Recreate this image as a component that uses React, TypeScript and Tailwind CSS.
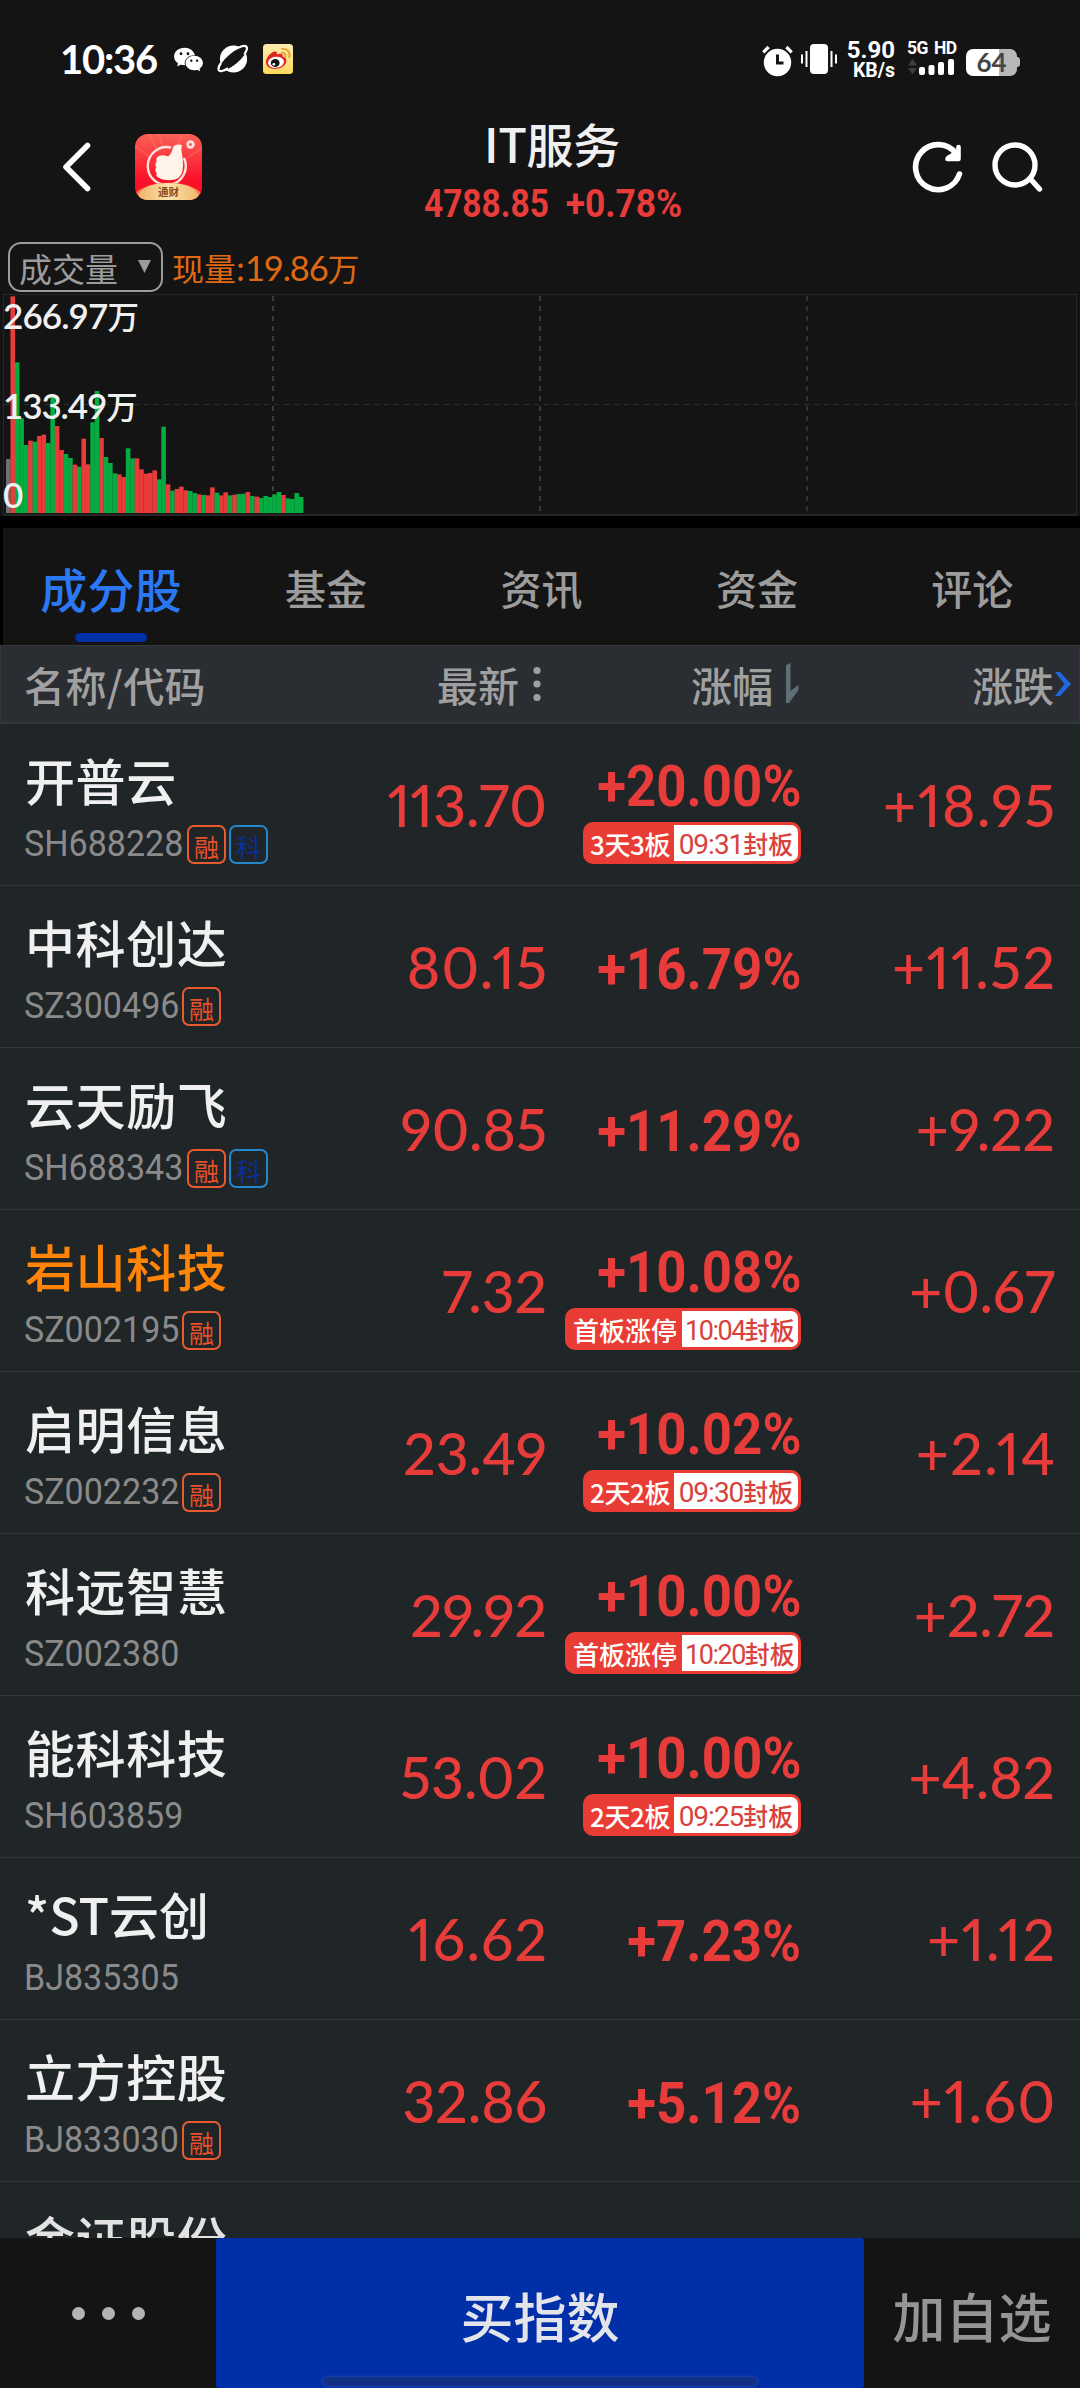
import React from "react";
import { AiFillWechat } from "react-icons/ai";

const CJK = "font-['Noto_Sans_CJK_SC',sans-serif]";
const RED = "#e83c3b";
const GREEN = "#04ac41";

type Stock = {
  name: string;
  code: string;
  price: string;
  pct: string;
  diff: string;
  rong?: boolean;
  ke?: boolean;
  held?: boolean;
  board?: string;
  time?: string;
};

const stocks: Stock[] = [
  { name: "开普云", code: "SH688228", price: "113.70", pct: "+20.00%", diff: "+18.95", rong: true, ke: true, board: "3天3板", time: "09:31" },
  { name: "中科创达", code: "SZ300496", price: "80.15", pct: "+16.79%", diff: "+11.52", rong: true },
  { name: "云天励飞", code: "SH688343", price: "90.85", pct: "+11.29%", diff: "+9.22", rong: true, ke: true },
  { name: "岩山科技", code: "SZ002195", price: "7.32", pct: "+10.08%", diff: "+0.67", rong: true, held: true, board: "首板涨停", time: "10:04" },
  { name: "启明信息", code: "SZ002232", price: "23.49", pct: "+10.02%", diff: "+2.14", rong: true, board: "2天2板", time: "09:30" },
  { name: "科远智慧", code: "SZ002380", price: "29.92", pct: "+10.00%", diff: "+2.72", board: "首板涨停", time: "10:20" },
  { name: "能科科技", code: "SH603859", price: "53.02", pct: "+10.00%", diff: "+4.82", board: "2天2板", time: "09:25" },
  { name: "*ST云创", code: "BJ835305", price: "16.62", pct: "+7.23%", diff: "+1.12" },
  { name: "立方控股", code: "BJ833030", price: "32.86", pct: "+5.12%", diff: "+1.60", rong: true },
];

// Heights of the volume bars in thirds of a pixel, with r/g/n for up/down/neutral.
const volume =
  "n162 r650 g452 g284 g204 r217 g214 r231 r235 g210 g349 r261 r189 g177 g165 r145 g139 r223 r146 g272 g366 r225 g168 g150 g119 r116 r108 g194 g164 r164 r131 r118 r120 r128 g101 g259 r86 g67 r72 r79 r68 g66 g60 r56 g54 r53 r77 g61 r53 r62 g53 r55 g57 g58 r63 g51 r49 g45 g51 g48 g56 g63 r54 g44 g42 g60 g48"
    .split(" ")
    .map((s) => ({ kind: s[0], h: Number(s.slice(1)) / 3 }));

function StatusBar() {
  return (
    <div className="flex h-[118px] items-start justify-between pl-[60px] pr-[60px] text-white">
      <div className="mt-[44px] flex h-[30px] items-center">
        <span className="w-[114px] whitespace-nowrap font-['Lato',sans-serif] text-[40px] font-bold leading-[30px] tracking-[-1.200px]">10:36</span>
        <AiFillWechat className="-ml-[2px] h-[33px] w-[33px]" />
        <svg className="ml-[12px] h-[32px] w-[32px]" viewBox="0 0 32 32">
          <circle cx="16.5" cy="16" r="13.6" fill="#fff" />
          <ellipse cx="16" cy="16" rx="17.5" ry="5.6" transform="rotate(-40 16 16)" fill="#141414" />
          <path d="M4 20C.5 25 .5 29 5 28c2.500-.5 4-1.500 6-2.800M22 4.500c5-2.500 9-2 7.800 2-.5 1.800-1.300 3.200-2.500 5" fill="none" stroke="#fff" strokeWidth="2.200" />
        </svg>
        <svg className="ml-[14px] h-[30px] w-[30px]" viewBox="0 0 30 30">
          <defs>
            <linearGradient id="wb" x1="0" y1="0" x2="0" y2="1"><stop stopColor="#fdeab0" /><stop offset="1" stopColor="#fdd95c" /></linearGradient>
          </defs>
          <rect width="30" height="30" rx="3.500" fill="url(#wb)" />
          <path d="M3 18c0-5 6-11 9.500-10.500 1.600.3 1.700 1.700 1.300 3 3-1.400 6.700-1.200 5.800 2 6 2 4.300 7.500 0 10.200C13 27 3 25 3 18Z" fill="#e02322" />
          <ellipse cx="13" cy="18.300" rx="8" ry="5.600" fill="#fff" transform="rotate(-7 13 18.300)" />
          <ellipse cx="12.200" cy="19" rx="4.400" ry="4" fill="#111" />
          <circle cx="10.800" cy="20.300" r="1.400" fill="#fff" />
          <path d="M18.800 8.800c2.600-.3 4.300 1.500 3.600 4.300M19 4.900c5.200-.6 8.500 3 7.300 8.200" fill="none" stroke="#eba030" strokeWidth="1.800" strokeLinecap="round" />
        </svg>
      </div>
      <div className="mt-[41px] flex h-[36px]">
        <svg className="mt-[4px] h-[32px] w-[31px]" viewBox="0 0 31 32">
          <circle cx="15.500" cy="17.500" r="13.700" fill="#fff" />
          <path d="M1.300 7.300 6.600 2M24.400 2l5.300 5.300" stroke="#fff" strokeWidth="3.200" />
          <path d="M15.500 9.500V18h6" fill="none" stroke="#141414" strokeWidth="3" />
        </svg>
        <svg className="ml-[8px] mt-[3px] h-[30px] w-[36px]" viewBox="0 0 36 30">
          <rect x="9" width="18" height="30" rx="4" fill="#fff" />
          <path d="M1 10.500v9M5.500 7v16M30.500 7v16M35 10.500v9" stroke="#fff" strokeWidth="2" />
        </svg>
        <div className="ml-[12px] flex w-[46px] flex-col items-end font-['Roboto',sans-serif] font-bold">
          <span className="text-[24px] leading-[18px]">5.90</span>
          <span className="mt-[2px] text-[19.500px] leading-[19px]">KB/s</span>
        </div>
        <div className="ml-[12px] flex w-[49px] flex-col">
          <span className="whitespace-nowrap font-['Roboto',sans-serif] text-[17.500px] font-bold leading-[15px] tracking-[-0.6px] [word-spacing:2.500px]">5G HD</span>
          <svg className="mt-[2px] h-[18px] w-[48px]" viewBox="0 0 48 18">
            <path d="M1 7.500 5.500 1 10 7.500ZM1 10h9l-4.500 6.500Z" fill="#3e3e3e" />
            <rect x="12" y="9" width="6" height="8" rx="2" fill="#fff" />
            <rect x="21.500" y="7" width="6" height="10" rx="2" fill="#fff" />
            <rect x="31" y="4" width="6" height="13" rx="2" fill="#fff" />
            <rect x="41" y="1" width="6" height="16" rx="2" fill="#fff" />
          </svg>
        </div>
        <div className="ml-[10px] mt-[6px] flex items-center">
          <div className="flex h-[27px] w-[51px] items-center justify-center rounded-[7px] bg-[linear-gradient(90deg,#fff_0,#fff_33px,#b8b8b8_33px)] font-['Lato',sans-serif] text-[26px] font-bold leading-none text-[#444]">64</div>
          <div className="h-[10px] w-[3px] rounded-r-[3px] bg-[#b8b8b8]" />
        </div>
      </div>
    </div>
  );
}

function AppLogo() {
  return (
    <div className="relative ml-[43px] mt-[16px] h-[66px] w-[67px] overflow-hidden rounded-[13px]">
      <svg className="h-full w-full" viewBox="0 0 67 66">
        <defs>
          <linearGradient id="lg" x1="0" y1="0" x2="0" y2="1"><stop stopColor="#fb6257" /><stop offset=".7" stopColor="#fb1029" /></linearGradient>
          <linearGradient id="gd" x1="0" y1="0" x2="1" y2="0"><stop stopColor="#eeb46a" /><stop offset=".5" stopColor="#fbe3ac" /><stop offset="1" stopColor="#efb76c" /></linearGradient>
        </defs>
        <rect width="67" height="66" fill="url(#lg)" />
        <path d="M14 0l9 18M24 0l4 14M47 0l-4 12M0 12l16 12M67 14 52 24" stroke="#ff8a6c" strokeWidth="1" opacity=".6" />
        <path d="M36 13.500A19 19 0 1 0 49 24" fill="none" stroke="#ffe4de" strokeWidth="2.400" />
        <path d="M24 22c3-1.500 7-.5 9 .5 3-2 4-5 5-9 1-3.500 6-3.500 9-2.500-1.500 5 .5 9 .8 15 .4 7 .5 14-4.500 18-5 3-14 2.500-18 .5-3-1-5-3-3.500-5.500-2-1.500-2-4-.5-5.500-1.500-2-1-4.500.5-6-1-2-.5-4.500 2.200-5.500Z" fill="#fff4ea" />
        <circle cx="55.500" cy="10.500" r="4.200" fill="#ffe0dc" />
        <circle cx="55.500" cy="10.500" r="1.600" fill="#f5615c" />
        <path d="M0 60C12 45 55 45 67 60v6H0Z" fill="#f57a4e" />
        <ellipse cx="33.500" cy="62" rx="30" ry="13" fill="url(#gd)" />
      </svg>
      <span className={`${CJK} absolute inset-x-0 bottom-[3px] text-center text-[10.500px] font-bold leading-[11px] text-[#8a4a1c]`}>通财</span>
    </div>
  );
}

function Header() {
  return (
    <div className="flex h-[120px] items-start">
      <svg className="ml-[60px] mt-[24px] h-[50px] w-[32px]" viewBox="0 0 32 50">
        <path d="M27.500 3.500 6 25l21.500 21.500" fill="none" stroke="#fff" strokeWidth="5.600" strokeLinecap="round" strokeLinejoin="round" />
      </svg>
      <AppLogo />
      <div className="ml-[152px] flex w-[400px] flex-col items-center">
        <span className={`${CJK} -mt-[3px] mr-[4px] text-[47px] font-medium leading-[56px] tracking-[-0.3px] text-[#f0f0f0]`}>IT服务</span>
        <div className="mt-[15px] flex w-[257px] justify-between font-['Roboto',sans-serif] text-[38px] font-bold leading-[36px] text-[#e83c3b]">
          <span className="w-[124px] origin-left -translate-x-[2px] scale-x-[0.88]">4788.85</span>
          <span className="flex w-[116px] justify-end"><span className="origin-right scale-x-[0.93]">+0.78%</span></span>
        </div>
      </div>
      <svg className="ml-[157px] mt-[22px] h-[54px] w-[54px]" viewBox="0 0 54 54" fill="none" stroke="#fff" strokeWidth="5.600" strokeLinecap="round" strokeLinejoin="round">
        <path d="M48.500 34A22.500 22.500 0 1 1 45 13.500" />
        <path d="M47.500 7v12H36.500" strokeWidth="4.600" />
        <path d="M45 14 38 18" strokeWidth="6" />
      </svg>
      <svg className="ml-[25px] mt-[22px] h-[54px] w-[54px]" viewBox="0 0 54 54" fill="none" stroke="#fff" strokeWidth="5.400" strokeLinecap="round">
        <circle cx="25" cy="25" r="20" />
        <path d="M40 38.500l9.500 10.500" />
      </svg>
    </div>
  );
}

function VolumeChart() {
  return (
    <div className="h-[278px]">
      <div className="flex h-[56px] items-start pl-[8px] pt-[4px]">
        <div className={`${CJK} flex h-[50px] w-[155px] items-center rounded-[13px] border-2 border-[#9c9c9c] pl-[9px] pt-[2px] text-[33px] leading-none text-[#9c9c9c]`}>
          <span className="w-[119px]">成交量</span>
          <svg className="-mt-[3px] h-[13px] w-[13px]" viewBox="0 0 13 13"><path d="M0 0h13L6.500 13Z" fill="#9c9c9c" /></svg>
        </div>
        <span className={`${CJK} ml-[9px] mt-[2px] whitespace-nowrap text-[32px] leading-[46px] text-[#df6913]`}>
          现量:<span className="font-['Lato',sans-serif] text-[34.500px] tracking-[-1.100px]">19.86</span>万
        </span>
      </div>
      <div className="relative ml-[3px] h-[222px] w-[1074px] border border-b-2 border-[#262626]">
        <svg className="h-[219px] w-[1072px]" viewBox="4 295 1072 219" shapeRendering="crispEdges">
          <g stroke="#3a3a3a" strokeDasharray="5 5" strokeWidth="2">
            <path d="M273 296V513" />
            <path d="M540 296V513" />
            <path d="M807 296V513" opacity=".75" />
            <path d="M4 404.500H1076" strokeWidth="1" opacity=".7" />
          </g>
          <g shapeRendering="auto">
            {volume.map((v, i) => (
              <rect key={i} x={6 + i * 4.437} y={513 - v.h} width="4.600" height={v.h} fill={v.kind === "r" ? RED : v.kind === "g" ? GREEN : "#6e7078"} />
            ))}
          </g>
        </svg>
        <div className={`${CJK} absolute inset-0 -top-[2px] flex flex-col text-[31.500px] font-medium leading-[40px] text-[#f0f0f0]`}>
          <span className="-ml-[1px] mt-[2px]"><span className="font-['Lato',sans-serif] text-[35px] font-semibold tracking-[-0.9px]">266.97</span>万</span>
          <span className="-ml-[1px] mt-[50px]"><span className="font-['Lato',sans-serif] text-[35px] font-semibold tracking-[-1.100px]">133.49</span>万</span>
          <span className="-ml-[1px] mt-[49px] font-['Lato',sans-serif] text-[35px] font-semibold">0</span>
        </div>
      </div>
    </div>
  );
}

function Tabs() {
  return (
    <div className="h-[129px] bg-black pl-[3px] pt-[12px]">
      <div className={`${CJK} grid h-[117px] grid-cols-5 bg-[#141414] text-center text-[41px] font-medium leading-[119px] text-[#9c9c9c]`}>
        <div className="relative pl-[1px] text-[47px] tracking-[0.3px] text-[#2b78f5]">
          成分股
          <div className="absolute left-[72px] top-[105px] h-[9px] w-[72px] rounded-full bg-[#002fa8]" />
        </div>
        {["基金", "资讯", "资金", "评论"].map((t) => <div key={t}>{t}</div>)}
      </div>
    </div>
  );
}

function TableHead() {
  return (
    <div className={`${CJK} flex h-[79px] items-center whitespace-nowrap border border-b-2 border-[#33383b] bg-[#2a2e32] pl-[23px] text-[41px] font-medium leading-[76px] text-[#a0a0a0]`}>
      <span className="w-[413px] tracking-[0.4px]">名称/代码</span>
      <span className="w-[84px]">最新</span>
      <svg className="ml-[12px] h-[36px] w-[8px]" viewBox="0 0 8 36" fill="#a0a0a0">
        <circle cx="4" cy="4.500" r="3.600" /><circle cx="4" cy="18" r="3.600" /><circle cx="4" cy="31.500" r="3.600" />
      </svg>
      <span className="ml-[150px] w-[84px]">涨幅</span>
      <svg className="ml-[11px] h-[42px] w-[13px]" viewBox="0 0 13 42"><path d="M0 2 4.500 0v28l8-6v5L3 40H0Z" fill="#5f6f78" /></svg>
      <span className="ml-[173px] w-[83px]">涨跌</span>
      <svg className="h-[24px] w-[16px]" viewBox="0 0 16 24"><path d="M0 0h5l11 12L5 24H0l9.500-12Z" fill="#1f68e0" /></svg>
    </div>
  );
}

function Badge({ kind }: { kind: "rong" | "ke" }) {
  return kind === "rong" ? (
    <span className={`${CJK} flex h-[39px] w-[39px] items-center justify-center rounded-[7px] border-2 border-[#e85a30] pt-[4px] text-[25px] leading-none text-[#e8502a]`}>融</span>
  ) : (
    <span className={`${CJK} flex h-[39px] w-[39px] items-center justify-center rounded-[7px] border-2 border-[#2486cc] pt-[4px] text-[25px] leading-none text-[#0a2f9c]`}>科</span>
  );
}

function Figure({ value }: { value: string }) {
  const spacing = value.startsWith("+") && value.includes("1")
    ? "tracking-[1.500px] -mr-[1.500px]"
    : value.includes("1") && !value.startsWith("11")
      ? "tracking-[1.200px] -mr-[1.200px]"
      : "";
  return (
    <span className={`whitespace-nowrap pt-px text-right font-['Lato',sans-serif] text-[57px] font-medium proportional-nums leading-[160px] text-[#e83c3b] ${spacing}`}>{value}</span>
  );
}

function Row({ s }: { s: Stock }) {
  const first = s.board === "首板涨停";
  return (
    <div className="grid h-[162px] shrink-0 grid-cols-[547px_254px_254px] border-b border-[#33383b]">
      <div className="flex justify-between">
        <div className="flex w-[300px] flex-col pl-[24px]">
          <span className={`${CJK} ml-px mt-[25px] whitespace-nowrap text-[50px] font-medium leading-[60px] ${s.name[0] === "*" ? "tracking-[0]" : "tracking-[0.6px]"} ${s.held ? "text-[#ff8408]" : "text-[#f0f0f0]"}`}>{s.name}</span>
          <div className="mt-[15px] flex h-[40px] items-center gap-[3px]">
            <span className={`${s.code[1] === "H" ? "w-[160px]" : "w-[155px]"} whitespace-nowrap font-['Roboto',sans-serif] text-[37px] leading-[40px] text-[#8a8a8a]`}>
              <span className="inline-block origin-left scale-x-[0.92]">{s.code}</span>
            </span>
            {s.rong && <Badge kind="rong" />}
            {s.ke && <Badge kind="ke" />}
          </div>
        </div>
        <Figure value={s.price} />
      </div>
      <div className={`flex flex-col items-end ${s.board ? "pt-[32px]" : "pt-[53px]"}`}>
        <span className="origin-right scale-x-[0.91] whitespace-nowrap font-['Roboto',sans-serif] text-[58px] font-bold leading-[60px] text-[#e83c3b]">{s.pct}</span>
        {s.board && (
          <div className={`${CJK} mt-[6px] flex h-[42px] items-center rounded-[10px] bg-[#e93c34] p-[3px] text-[26px] leading-[36px] ${first ? "w-[236px]" : "w-[218px]"}`}>
            <span className="flex-1 whitespace-nowrap pt-[1px] text-center font-medium text-white">
              {first ? s.board : <span className="tracking-[-0.4px]">{s.board}</span>}
            </span>
            <span className={`flex h-[36px] items-center justify-center rounded-r-[7px] bg-white text-[25px] text-[#d8423c] ${first ? "w-[116px]" : "w-[124px]"}`}>
              <span className="whitespace-nowrap pt-[2px] font-medium">
                <span className={`font-['Roboto',sans-serif] font-normal ${first ? "text-[27px] tracking-[-1.500px]" : "text-[28px] tracking-[-1px]"}`}>{s.time}</span>封板
              </span>
            </span>
          </div>
        )}
      </div>
      <Figure value={s.diff} />
    </div>
  );
}

function Footer() {
  return (
    <div className={`${CJK} relative grid h-[150px] grid-cols-[216px_648px_216px] overflow-hidden bg-[#141414] text-[53px] font-medium leading-[154px]`}>
      <div className="flex items-center justify-center gap-[17px]">
        <i className="h-[13px] w-[13px] rounded-full bg-[#b4b4b4]" />
        <i className="h-[13px] w-[13px] rounded-full bg-[#b4b4b4]" />
        <i className="h-[13px] w-[13px] rounded-full bg-[#b4b4b4]" />
      </div>
      <div className="h-[150px] rounded-[3px] bg-[#002fa8] text-center text-[#e2e4ea]">买指数</div>
      <div className="h-[150px] text-center text-[#959595]">加自选</div>
      <div className="absolute bottom-[2px] left-[323px] h-[9px] w-[434px] rounded-full bg-[#123084] shadow-[0_0_3px_#3a5cc0]" />
    </div>
  );
}

export default function App() {
  return (
    <div className="flex h-[2388px] w-[1080px] flex-col overflow-hidden bg-[#141414]">
      <StatusBar />
      <Header />
      <VolumeChart />
      <Tabs />
      <TableHead />
      <div className="flex h-[1514px] flex-col overflow-hidden bg-[#202527]">
        {stocks.map((s) => <Row key={s.code} s={s} />)}
        <span className={`${CJK} mt-[25px] shrink-0 pl-[25px] text-[50px] font-medium leading-[60px] tracking-[0.6px] text-[#e2e2e2]`}>金证股份</span>
      </div>
      <Footer />
    </div>
  );
}
